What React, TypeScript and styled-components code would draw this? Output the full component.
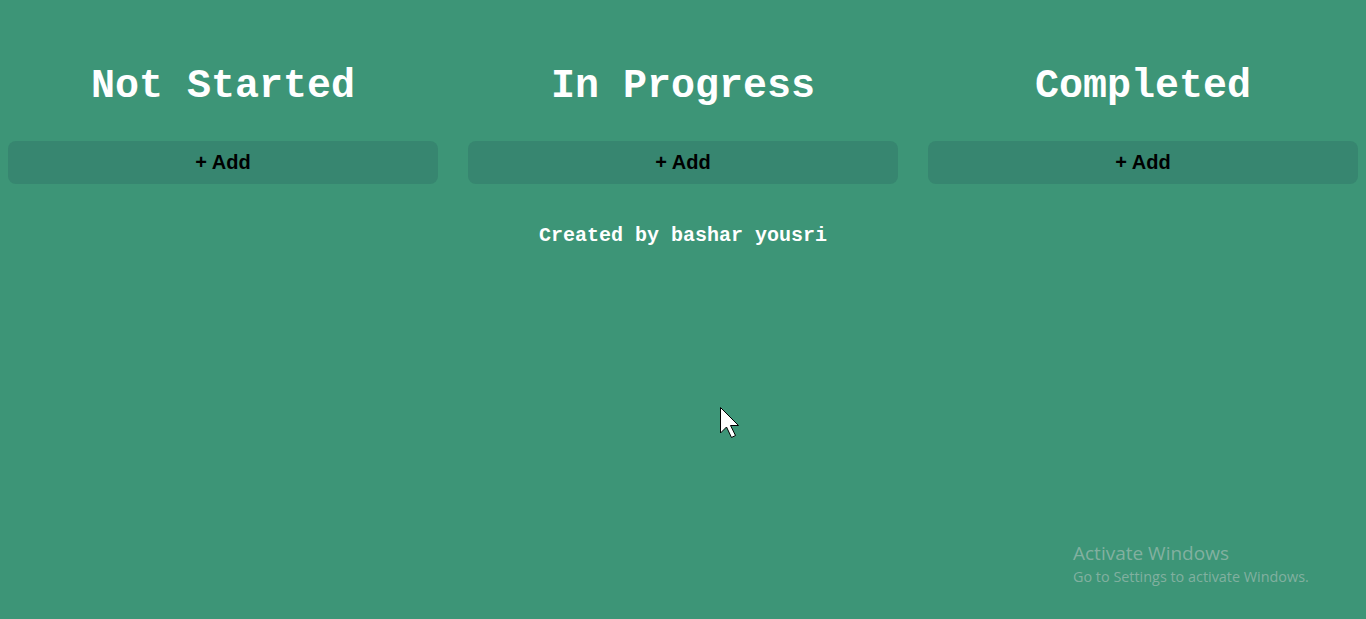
import React from "react";
import styled, { createGlobalStyle } from "styled-components";

const Global = createGlobalStyle`
  html, body { margin: 0; padding: 0; }
  body {
    background: #3d9577;
    min-height: 619px;
    font-family: "Liberation Sans", Arial, sans-serif;
    overflow: hidden;
  }
`;

const Page = styled.div`
  padding: 64px 8px 0;
  min-height: 619px;
  box-sizing: border-box;
  position: relative;
`;

const Board = styled.div`
  display: grid;
  grid-template-columns: repeat(3, 430px);
  column-gap: 30px;
`;

const Column = styled.div`
  display: flex;
  flex-direction: column;
  align-items: stretch;
`;

const Title = styled.h1`
  margin: 0 0 32px;
  font-family: "Liberation Mono", "Courier New", monospace;
  font-weight: 700;
  font-size: 40px;
  line-height: 45px;
  color: #ffffff;
  text-align: center;
`;

const AddButton = styled.button`
  height: 43px;
  border: none;
  border-radius: 8px;
  background: #378670;
  color: #000;
  font-family: "Liberation Sans", Arial, sans-serif;
  font-weight: 700;
  font-size: 20px;
  cursor: pointer;
`;

const Footer = styled.p`
  margin: 40px 0 0;
  text-align: center;
  font-family: "Liberation Mono", "Courier New", monospace;
  font-weight: 700;
  font-size: 20px;
  line-height: 23px;
  color: #ffffff;
`;

const Watermark = styled.div`
  position: absolute;
  left: 1073px;
  top: 542px;
  font-family: "Open Sans", "Noto Sans", sans-serif;
  color: rgba(190, 200, 196, 0.55);
  line-height: 1.2;
`;

const WmTitle = styled.div`
  font-size: 19px;
`;

const WmSub = styled.div`
  font-size: 14.4px;
  margin-top: 3px;
`;

const Cursor = styled.svg`
  position: absolute;
  left: 719px;
  top: 406px;
`;

const columns = ["Not Started", "In Progress", "Completed"];

export default function App() {
  return (
    <>
      <Global />
      <Page>
        <Board>
          {columns.map((c) => (
            <Column key={c}>
              <Title>{c}</Title>
              <AddButton>+ Add</AddButton>
            </Column>
          ))}
        </Board>
        <Footer>Created by bashar yousri</Footer>
        <Watermark>
          <WmTitle>Activate Windows</WmTitle>
          <WmSub>Go to Settings to activate Windows.</WmSub>
        </Watermark>
        <Cursor width="24" height="36" viewBox="0 0 24 36">
          <path
            d="M1.5 1.5 L1.5 27 L7.5 21 L12.5 31.5 L16.5 29.5 L11.5 19.5 L19.5 19.5 Z"
            fill="#fff"
            stroke="#000"
            strokeWidth="1"
            strokeLinejoin="miter"
          />
        </Cursor>
      </Page>
    </>
  );
}
